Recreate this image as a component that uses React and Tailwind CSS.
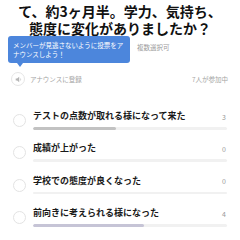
export default function App() {
  const options = [
    { label: "テストの点数が取れる様になって来た", count: 3, fill: "bg-[#c2c2c2]" },
    { label: "成績が上がった", count: 0, fill: "bg-[#c2c2c2]" },
    { label: "学校での態度が良くなった", count: 0, fill: "bg-[#c2c2c2]" },
    { label: "前向きに考えられる様になった", count: 4, fill: "bg-[#c6c4d6]" },
  ];
  const total = 7;
  return (
    <div className="relative w-60 h-60 overflow-hidden bg-white font-['Noto_Sans_CJK_JP',sans-serif]">
      <div className="pt-[3px] text-center text-[14px] leading-[17px] font-bold text-[#111]">
        <div>て、約3ヶ月半。学力、気持ち、</div>
        <div>態度に変化がありましたか？</div>
      </div>

      <div className="mt-[5.5px] h-[9px] pl-[137px] text-[6.5px] leading-[9px] text-[#9a9a9a]">
        複数選択可
      </div>

      <div className="mt-[20.5px] flex h-[14px] w-full items-center pl-[11px] pr-[12px]">
        <div className="flex h-[14px] w-[14px] shrink-0 items-center justify-center rounded-full border border-[#e6e6e6] bg-white">
          <svg width="7" height="7" viewBox="0 0 10 10">
            <path d="M1 3.5h2l3-2.5v8l-3-2.5H1z" fill="#b5b5b5" />
            <path d="M7.5 3.5q1 1.5 0 3" stroke="#b5b5b5" strokeWidth="0.9" fill="none" />
          </svg>
        </div>
        <div className="ml-[5px] text-[6.5px] leading-[9px] text-[#a5a5a5]">アナウンスに登録</div>
        <div className="ml-auto text-[6.5px] leading-[9px] text-[#a5a5a5]">7人が参加中</div>
      </div>

      <div className="mt-[24px] flex w-full flex-col">
        {options.map((o, i) => (
          <div key={i} className="flex h-[32.4px] w-full items-start pl-[13px] pr-[13px]">
            <div className="mt-[4px] h-[13px] w-[13px] shrink-0 rounded-full border border-[#e3e3e3] bg-white" />
            <div className="ml-[7px] flex min-w-0 flex-1 flex-col">
              <div className="flex items-start">
                <div className="text-[9px] leading-[12px] font-bold text-[#1a1a1a]">{o.label}</div>
                <div className="ml-auto mt-[2.5px] pr-[1px] text-[7px] leading-[9px] text-[#9a9a9a]">{o.count}</div>
              </div>
              <div className="mt-[5px] h-[2.5px] w-full overflow-hidden rounded-full bg-[#f1f1f1]">
                <div className={`h-full rounded-full ${o.fill}`} style={{ width: `${(o.count / total) * 100}%` }} />
              </div>
            </div>
          </div>
        ))}
      </div>

      <div className="absolute left-[8px] top-[36px] h-[27px] w-[122px] rounded-[3px] bg-[#4c86dc] pl-[5px] pt-[4.5px] text-[6.5px] leading-[9px] text-white">
        <div>メンバーが見逃さないように投票をア</div>
        <div>ナウンスしよう！</div>
        <div className="absolute left-[9px] top-[27px] h-0 w-0 border-l-[3px] border-r-[3px] border-t-[4px] border-l-transparent border-r-transparent border-t-[#4c86dc]" />
      </div>
    </div>
  );
}
